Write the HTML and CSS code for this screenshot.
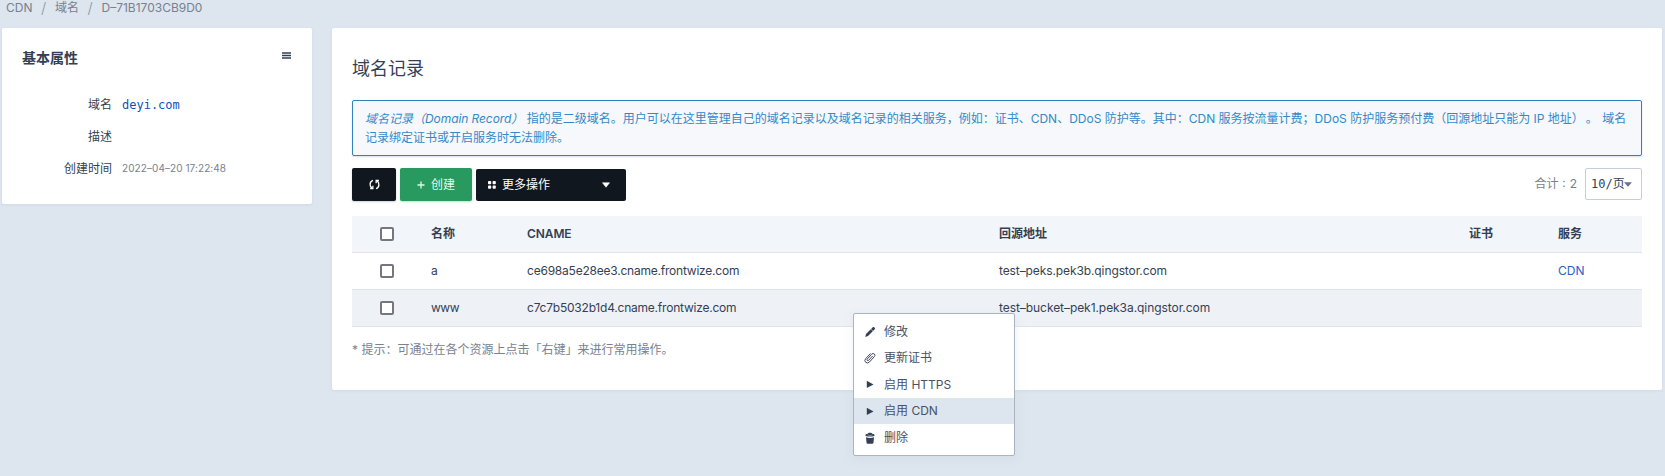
FILE: index.html
```html
<!DOCTYPE html>
<html lang="zh-CN">
<head>
<meta charset="utf-8">
<title>域名记录</title>
<link rel="stylesheet" href="styles.css">
</head>
<body>
<nav class="breadcrumb"><span class="bc-cdn">CDN</span><i>/</i><span>域名</span><i>/</i><span class="bc-id">D–71B1703CB9D0</span></nav>
<div class="layout">
  <aside class="card side">
    <header class="side-head">
      <h2>基本属性</h2>
      <svg class="burger" width="9" height="7" viewBox="0 0 9 7"><path d="M0 1h9M0 3.5h9M0 6h9" stroke="#343f54" stroke-width="1.4"/></svg>
    </header>
    <dl class="props">
      <dt>域名</dt><dd class="domain">deyi.com</dd>
      <dt>描述</dt><dd></dd>
      <dt>创建时间</dt><dd class="time">2022–04–20 17:22:48</dd>
    </dl>
  </aside>
  <main class="card main">
    <h1>域名记录</h1>
    <div class="alert">
      <p class="l1"><em>域名记录（<span class="rec">Domain Record</span>）</em> 指的是二级域名。用户可以在这里管理自己的域名记录以及域名记录的相关服务，例如：证书、CDN、DDoS 防护等。其中：CDN 服务按流量计费；DDoS 防护服务预付费（回源地址只能为 IP 地址）<span class="stop">。</span> 域名</p>
      <p>记录绑定证书或开启服务时无法删除。</p>
    </div>
    <div class="toolbar">
      <button class="btn refresh"><svg width="11" height="11" viewBox="0 0 10 10" fill="none" stroke="#fff" stroke-width="1.2"><path d="M3.6 1.2C.3 2.3.2 6.8 2.9 8.5M6.4 8.8C9.7 7.7 9.8 3.2 7.1 1.5"/><path d="M1 8.7h2.5V6.2M9 1.3H6.500V3.800"/></svg></button>
      <button class="btn create"><svg width="8" height="8" viewBox="0 0 8 8"><path d="M4 .5v7M.5 4h7" stroke="#d8fbe7" stroke-width="1.3"/></svg>创建</button>
      <button class="btn more"><svg width="8" height="8" viewBox="0 0 8 8" fill="#fff"><rect width="3.200" height="3.200" rx=".8"/><rect x="4.600" width="3.200" height="3.200" rx=".8"/><rect y="4.600" width="3.200" height="3.200" rx=".8"/><rect x="4.600" y="4.600" width="3.200" height="3.200" rx=".8"/></svg><span>更多操作</span><svg class="caret" width="8" height="6" viewBox="0 0 8 6"><path d="M.4.7h7.200L4 5.300z" fill="#fff" stroke="#fff" stroke-width=".5"/></svg></button>
      <span class="total">合计 : 2</span>
      <div class="select"><span>10/页</span><svg width="8" height="5" viewBox="0 0 8 5"><path d="M0 .3h8L4 4.700z" fill="#6b7280"/></svg></div>
    </div>
    <div class="table">
      <div class="row head"><span class="ck"></span><b>名称</b><b class="hc">CNAME</b><b>回源地址</b><b>证书</b><b>服务</b></div>
      <div class="row"><span class="ck"></span><span>a</span><span class="c1">ce698a5e28ee3.cname.frontwize.com</span><span class="c2">test–peks.pek3b.qingstor.com</span><span></span><a class="cdn">CDN</a></div>
      <div class="row active"><span class="ck"></span><span class="www">www</span><span class="c1">c7c7b5032b1d4.cname.frontwize.com</span><span class="c3">test–bucket–pek1.pek3a.qingstor.com</span><span></span><span></span></div>
    </div>
    <p class="hint">* 提示：可通过在各个资源上点击「右键」来进行常用操作。</p>
  </main>
</div>
<ul class="menu">
  <li><svg width="12" height="12" viewBox="0 0 12 12" fill="#343f54"><path d="M1.300 10.900l.7-2.900L6.800 3.200 8.800 5.200 4 10zM7.100 2.900L9 1.100q.4-.4.900 0l1 1q.4.400 0 .9L9.100 4.900z"/></svg>修改</li>
  <li><svg width="12" height="12" viewBox="0 0 12 12" fill="none" stroke="#414b60" stroke-width="1"><path d="M8.600 4L4.700 8.300Q3.800 9 3.200 8.400T3.300 7L7.700 2.200Q9.100.8 10.400 2T10.300 4.700L5.400 10Q3.500 11.900 1.700 10.300T1.700 6.600L6.500 1.500"/></svg>更新证书</li>
  <li><svg width="12" height="12" viewBox="0 0 12 12"><path d="M2.800 2.700v7.400L9.500 6.400z" fill="#343f54"/></svg>启用 HTTPS</li>
  <li class="on"><svg width="12" height="12" viewBox="0 0 12 12"><path d="M2.800 2.700v7.400L9.500 6.400z" fill="#343f54"/></svg>启用 CDN</li>
  <li class="last"><svg width="12" height="12" viewBox="0 0 12 12" fill="#343f54"><path d="M2 5.300q4 1.400 8 0l-.5 5.200q-.1 1.200-1.300 1.200H3.800q-1.200 0-1.300-1.200z"/><path d="M1.300 3.200q0-1.100 2.400-1.500Q4.300.8 5.200.8h1.600q.9 0 1.500.9 2.400.4 2.400 1.500 0 1.400-4.700 1.400T1.300 3.200z"/><path d="M3.500 3.100q2.500.8 5 0" fill="none" stroke="#aab1bd" stroke-width=".6"/></svg>删除</li>
</ul>
</body>
</html>
```
FILE: styles.css
```css
* { box-sizing: border-box; margin: 0; padding: 0; }
body { height: 476px; overflow: hidden; background: #dde5ee; font: 12px/19px Inter, "Noto Sans CJK SC", sans-serif; color: #343f54; white-space: nowrap; text-spacing-trim: space-all; }
.breadcrumb { height: 28px; padding-left: 6px; display: flex; line-height: 15px; color: #79818e; }
.breadcrumb i { font-style: normal; font-weight: 300; font-size: 15px; width: 22.5px; text-align: center; color: #8d97a5; }
.layout { display: flex; align-items: flex-start; gap: 20px; padding-left: 2px; }
.card { background: #fff; border-radius: 2px; box-shadow: 0 1px 2px #c9d3df80; }
.side { width: 310px; height: 176px; padding: 20px; }
.side-head { display: flex; justify-content: space-between; }
.side-head h2 { font-size: 14px; line-height: 20px; font-weight: 600; }
.burger { margin: 4px 1px 0 0; }
.props { display: grid; grid-template-columns: 90px 1fr; column-gap: 10px; grid-auto-rows: 32px; line-height: 32px; margin-top: 20px; }
.props dt { text-align: right; padding-top: 1px; }
.domain { padding-top: 1px; font-family: "DejaVu Sans Mono", monospace; color: #0d51bd; }
.time { font-size: 10px; letter-spacing: .08px; color: #79818e; }
.main { width: 1330px; height: 362px; padding: 28px 20px 0; }
h1 { font-size: 18px; font-weight: 400; line-height: 26px; }
.alert { height: 56px; margin-top: 18px; padding: 8px 12px; border: 1px solid #3280bd; border-radius: 2px; background: #f6f8fc; color: #3489c8; box-shadow: 0 1px 2px #d4dfeb; }
.rec { letter-spacing: -.08px; }
.stop { padding: 0 1px 0 2px; }
.toolbar { display: flex; gap: 4px; margin-top: 12px; height: 33px; align-items: flex-start; }
.btn { border: 0; height: 33px; border-radius: 2px; background: #10171f; color: #fff; font: inherit; display: flex; align-items: center; justify-content: center; box-shadow: 0 1px 2px #cbd2dc; }
.refresh { width: 44px; }
.create { width: 72px; background: #28995f; gap: 6px; color: #e3fced; box-shadow: 0 1px 2px #a8efc8; }
.more { width: 150px; height: 32px; margin-top: 1px; justify-content: flex-start; padding: 0 16px 1px 12px; gap: 6px; box-shadow: none; }
.caret { margin-left: auto; }
.total { margin-left: auto; line-height: 32px; color: #79818e; margin-right: 4px; word-spacing: .5px; }
.select { width: 57px; height: 32px; border: 1px solid #c8ced9; border-radius: 2px; display: flex; align-items: center; padding-left: 5px; font-family: "DejaVu Sans Mono", "Noto Sans CJK SC", monospace; }
.select svg { margin-left: -1px; }
.table { margin-top: 15px; }
.row { display: grid; grid-template-columns: 79px 96px 472px 470px 89px 84px; height: 37px; align-items: center; border-bottom: 1px solid #dde4ec; }
.row > * { margin-bottom: 2px; }
.row.head { background: #f2f5fa; }
.row.active { background: #eef2f7; }
.row b { font-weight: 600; }
.hc, .c2 { letter-spacing: -.1px; }
.c1 { letter-spacing: -.22px; }
.c3 { letter-spacing: -.06px; }
.www { letter-spacing: -.5px; }
.row > .ck { width: 14px; height: 14px; border: 2px solid #767680; border-radius: 2px; background: #fff; margin: 0 0 0 28px; }
.cdn { color: #2465bd; }
.hint { margin-top: 13px; color: #79818e; }
.menu { position: absolute; left: 853px; top: 313px; width: 162px; height: 143px; padding: 5px 0; background: #fff; border: 1px solid #a9b4c1; border-radius: 2px; list-style: none; box-shadow: 0 2px 10px #b9c7d840; }
.menu li { display: flex; align-items: center; gap: 8px; height: 26.3px; padding: 0 0 1px 10px; color: #485165; }
.menu .on { background: #dde5ee; }
.menu .last { padding: 1px 0 0 10px; }
```
